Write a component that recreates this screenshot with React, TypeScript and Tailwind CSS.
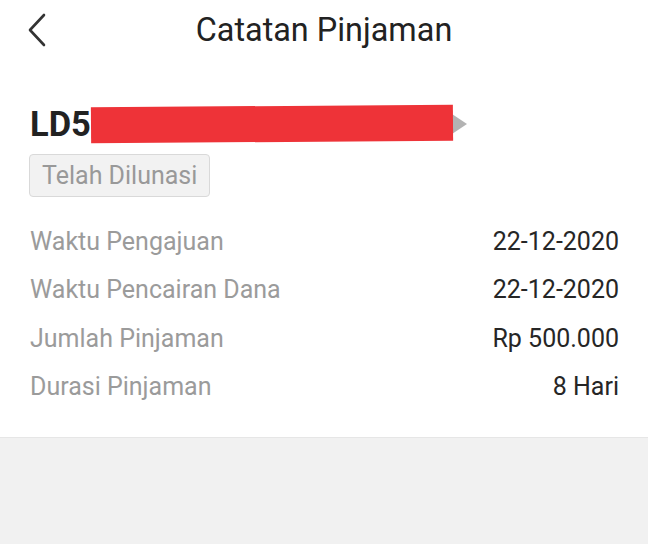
import React from "react";

const rows = [
  { label: "Waktu Pengajuan", value: "22-12-2020" },
  { label: "Waktu Pencairan Dana", value: "22-12-2020" },
  { label: "Jumlah Pinjaman", value: "Rp 500.000" },
  { label: "Durasi Pinjaman", value: "8 Hari" },
];

export default function App() {
  return (
    <main className="h-[544px] w-[648px] overflow-hidden bg-[#f1f1f1] font-['Roboto',sans-serif]">
      <div className="border-b border-[#e6e6e6] bg-white pb-[26px]">
        {/* Header */}
        <div className="grid h-[60px] grid-cols-[1fr_auto_1fr] items-center">
          <div className="pl-[25px]">
            <svg width="24" height="34" viewBox="0 0 24 34" fill="none">
              <path d="M19 2 L5 17 L19 32" stroke="#333" strokeWidth="2.6" strokeLinecap="round" strokeLinejoin="round" />
            </svg>
          </div>
          <h1 className="text-[32.4px] leading-none text-[#222]">Catatan Pinjaman</h1>
          <div />
        </div>

        {/* Loan id */}
        <div className="mt-[44px] flex h-[40px] items-center px-[30px]">
          <span className="text-[34.5px] font-bold leading-none text-[#222]">LD5</span>
          <span className="h-[36px] w-[362px] -rotate-[0.4deg] bg-[#ee3338]" />
          <svg width="16" height="20" viewBox="0 0 16 20" className="ml-[-1px]">
            <path d="M0 0 L15 10 L0 20 Z" fill="#b3b3b3" />
          </svg>
        </div>

        {/* Status badge */}
        <div className="mt-[10px] px-[29px]">
          <span className="inline-flex h-[43px] items-center rounded-[4px] border border-[#d9d9d9] bg-[#f2f2f2] px-[12px] text-[25px] text-[#999]">
            Telah Dilunasi
          </span>
        </div>

        {/* Details */}
        <div className="mt-[20px] pl-[30px] pr-[29px]">
          {rows.map((r) => (
            <div key={r.label} className="flex h-[48.5px] items-center justify-between text-[25px] leading-none">
              <span className="text-[#9b9b9b]">{r.label}</span>
              <span className="text-[#262626]">{r.value}</span>
            </div>
          ))}
        </div>
      </div>
    </main>
  );
}
